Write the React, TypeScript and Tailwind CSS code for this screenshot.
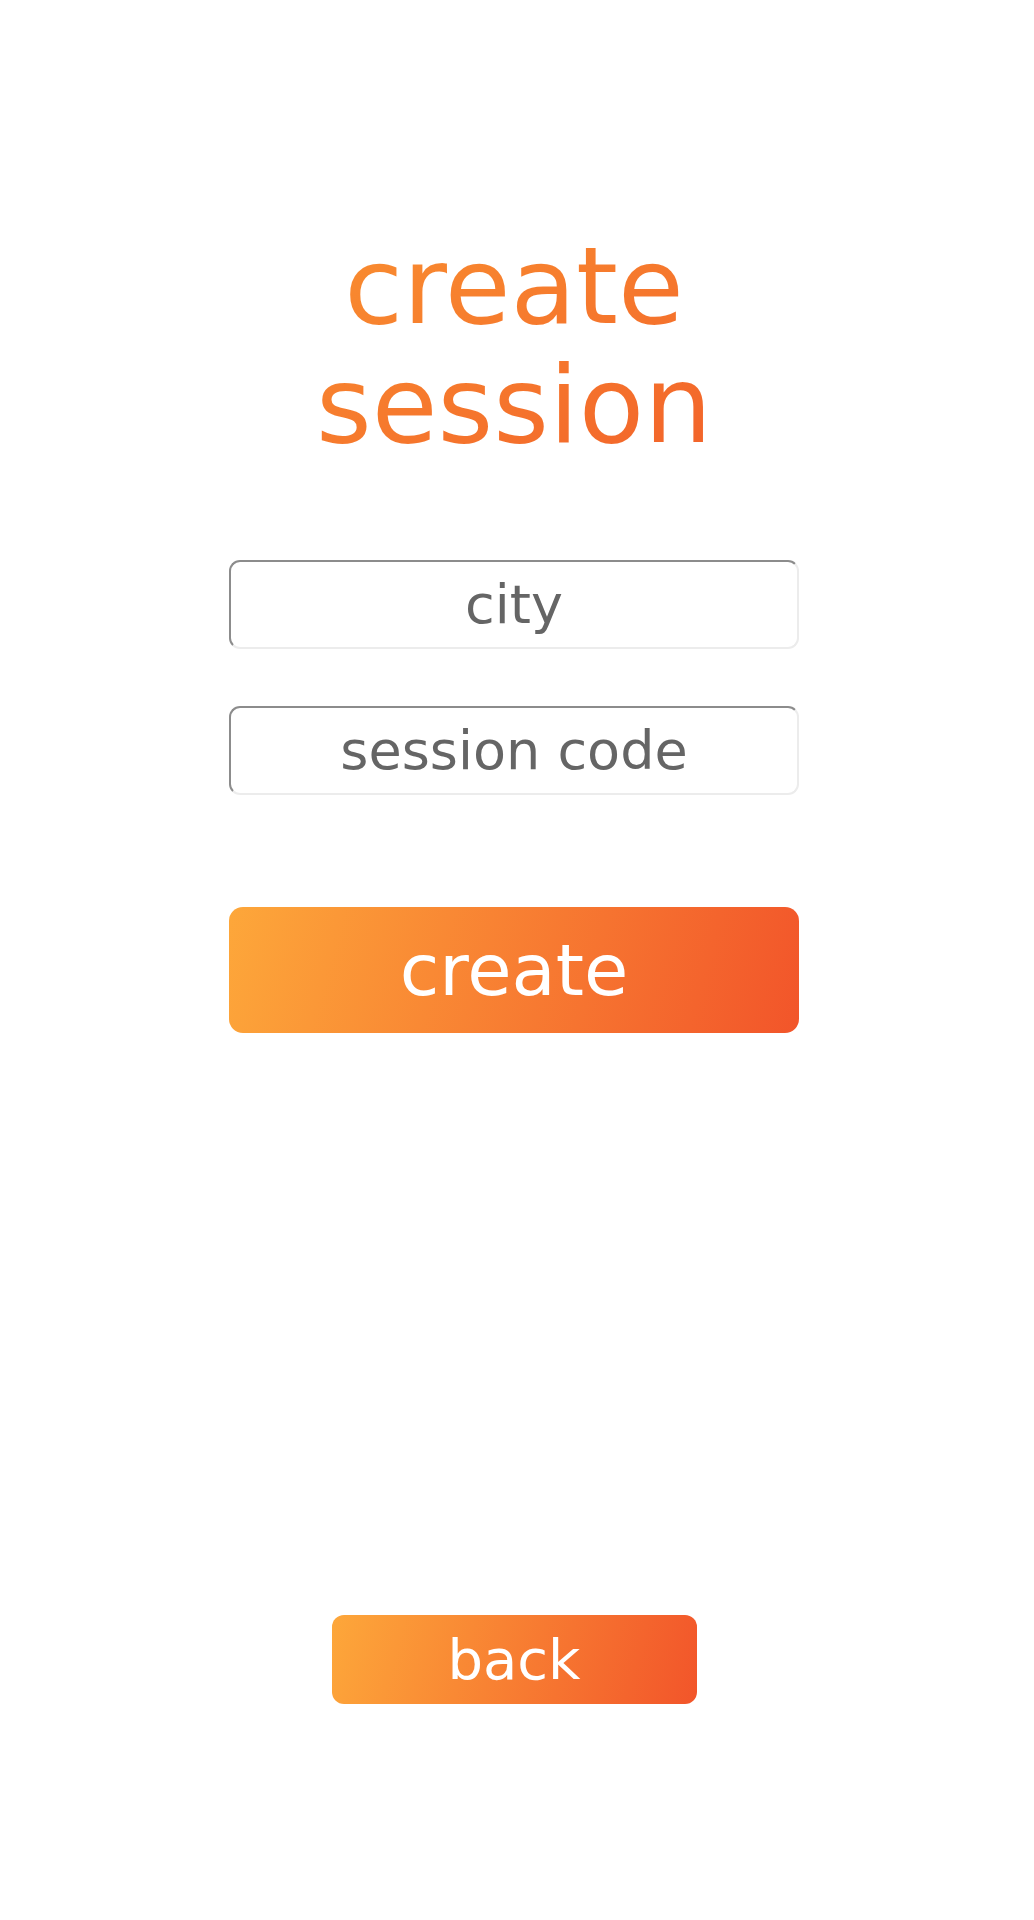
import { useState } from "react";

const FONT = "font-['DejaVu_Sans','Liberation_Sans',sans-serif]";

function Field({ placeholder }: { placeholder: string }) {
  const [value, setValue] = useState("");
  return (
    <input
      value={value}
      onChange={(e) => setValue(e.target.value)}
      placeholder={placeholder}
      className={`${FONT} h-[89px] w-full rounded-[11px] border-2 border-t-[#8c8c8c] border-l-[#8c8c8c] border-r-[#ececec] border-b-[#ececec] bg-white text-center text-[54px] text-[#5e5e5e] outline-none placeholder:text-[#656565]`}
    />
  );
}

export default function App() {
  return (
    <div className={`${FONT} flex min-h-[1920px] w-full flex-col items-center bg-white pr-[6px]`}>
      <h1 className="mt-[227px] bg-linear-to-br from-[#f98f30] to-[#f2622a] bg-clip-text text-center text-[107px] leading-[119px] font-normal text-transparent">
        create
        <br />
        session
      </h1>

      <form
        className="mt-[95px] flex w-[570px] flex-col"
        onSubmit={(e) => e.preventDefault()}
      >
        <Field placeholder="city" />
        <div className="mt-[57px]">
          <Field placeholder="session code" />
        </div>
        <button
          type="submit"
          className="mt-[112px] flex h-[126px] w-full items-center justify-center rounded-[14px] bg-linear-[105deg] from-[#fda73a] to-[#f2552a] text-[72px] text-white"
        >
          create
        </button>
      </form>

      <button
        type="button"
        className="mt-[582px] flex h-[89px] w-[365px] items-center justify-center rounded-[12px] bg-linear-[105deg] from-[#fda73a] to-[#f2552a] text-[56px] text-white"
      >
        back
      </button>
    </div>
  );
}
